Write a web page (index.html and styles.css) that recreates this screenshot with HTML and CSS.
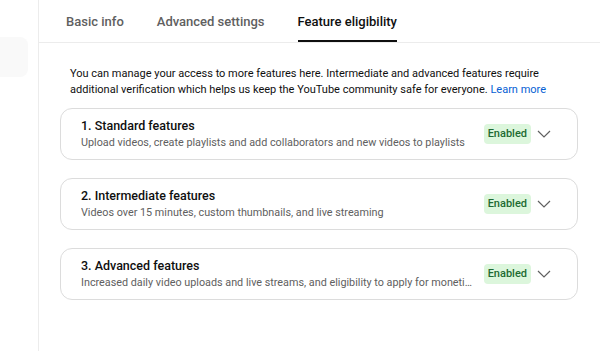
FILE: index.html
```html
<!DOCTYPE html>
<html lang="en">
<head>
    <meta charset="UTF-8">
    <meta name="viewport" content="width=device-width, initial-scale=1.0">
    <title>Feature eligibility</title>
    <link rel="stylesheet" href="styles.css">
</head>
<body>
    <aside class="sidebar">
        <div class="side-item"></div>
    </aside>

    <main class="main">
        <nav class="tabs">
            <div class="tab">Basic info</div>
            <div class="tab">Advanced settings</div>
            <div class="tab active">Feature eligibility</div>
        </nav>

        <section class="content">
            <p class="intro">
                You can manage your access to more features here. Intermediate and advanced features require
                additional verification which helps us keep the YouTube community safe for everyone.
                <a href="#" class="link">Learn more</a>
            </p>

            <div class="feature-card">
                <div class="feature-text">
                    <div class="feature-title">1. Standard features</div>
                    <div class="feature-desc">Upload videos, create playlists and add collaborators and new videos to playlists</div>
                </div>
                <span class="badge">Enabled</span>
                <svg class="chevron" width="14" height="8" viewBox="0 0 14 8"><path d="M1 1l6 6 6-6" fill="none" stroke="#606060" stroke-width="1.2"/></svg>
            </div>

            <div class="feature-card">
                <div class="feature-text">
                    <div class="feature-title">2. Intermediate features</div>
                    <div class="feature-desc">Videos over 15 minutes, custom thumbnails, and live streaming</div>
                </div>
                <span class="badge">Enabled</span>
                <svg class="chevron" width="14" height="8" viewBox="0 0 14 8"><path d="M1 1l6 6 6-6" fill="none" stroke="#606060" stroke-width="1.2"/></svg>
            </div>

            <div class="feature-card">
                <div class="feature-text">
                    <div class="feature-title">3. Advanced features</div>
                    <div class="feature-desc">Increased daily video uploads and live streams, and eligibility to apply for monetization features</div>
                </div>
                <span class="badge">Enabled</span>
                <svg class="chevron" width="14" height="8" viewBox="0 0 14 8"><path d="M1 1l6 6 6-6" fill="none" stroke="#606060" stroke-width="1.2"/></svg>
            </div>
        </section>
    </main>
</body>
</html>
```

FILE: styles.css
```css
body {
    font-family: Roboto, Arial, sans-serif;
    background-color: #fff;
    color: #0f0f0f;
    margin: 0;
    display: flex;
    min-height: 351px;
}
.sidebar {
    width: 38px;
    flex-shrink: 0;
    border-right: 1px solid #ececec;
    padding-top: 37px;
}
.side-item {
    width: 28px;
    height: 40px;
    background: #f9f9f9;
    border-radius: 0 8px 8px 0;
}
.main {
    flex: 1;
    min-width: 0;
}
.tabs {
    display: flex;
    gap: 33px;
    height: 42px;
    padding-left: 27px;
    border-bottom: 1px solid #ececec;
}
.tab {
    font-size: 13px;
    font-weight: 500;
    color: #606060;
    padding-top: 2px;
    line-height: 40px;
    box-sizing: border-box;
}
.tab.active {
    color: #0f0f0f;
    border-bottom: 2px solid #0f0f0f;
}
.content {
    padding: 23px 22px 0 21px;
}
.intro {
    margin: 0 0 10px 10px;
    font-size: 11px;
    line-height: 16px;
    color: #0f0f0f;
}
.link {
    color: #065fd4;
    text-decoration: none;
}
.feature-card {
    display: flex;
    align-items: center;
    height: 52px;
    box-sizing: border-box;
    border: 1px solid #dcdcdc;
    border-radius: 12px;
    padding: 0 26px 0 20px;
    margin-bottom: 18px;
}
.feature-text {
    flex: 1;
    min-width: 0;
    margin-right: 8px;
}
.feature-title {
    font-size: 12.5px;
    font-weight: 500;
    line-height: 18px;
    color: #0f0f0f;
}
.feature-desc {
    font-size: 10.8px;
    line-height: 16px;
    color: #606060;
    white-space: nowrap;
    overflow: hidden;
    text-overflow: ellipsis;
}
.badge {
    background: #dcf6dc;
    color: #1e6b32;
    font-size: 11px;
    font-weight: 500;
    line-height: 20px;
    padding: 0 4px;
    border-radius: 4px;
    margin-top: -1px;
}
.chevron {
    margin-left: 6px;
    margin-top: -1px;
}
```
